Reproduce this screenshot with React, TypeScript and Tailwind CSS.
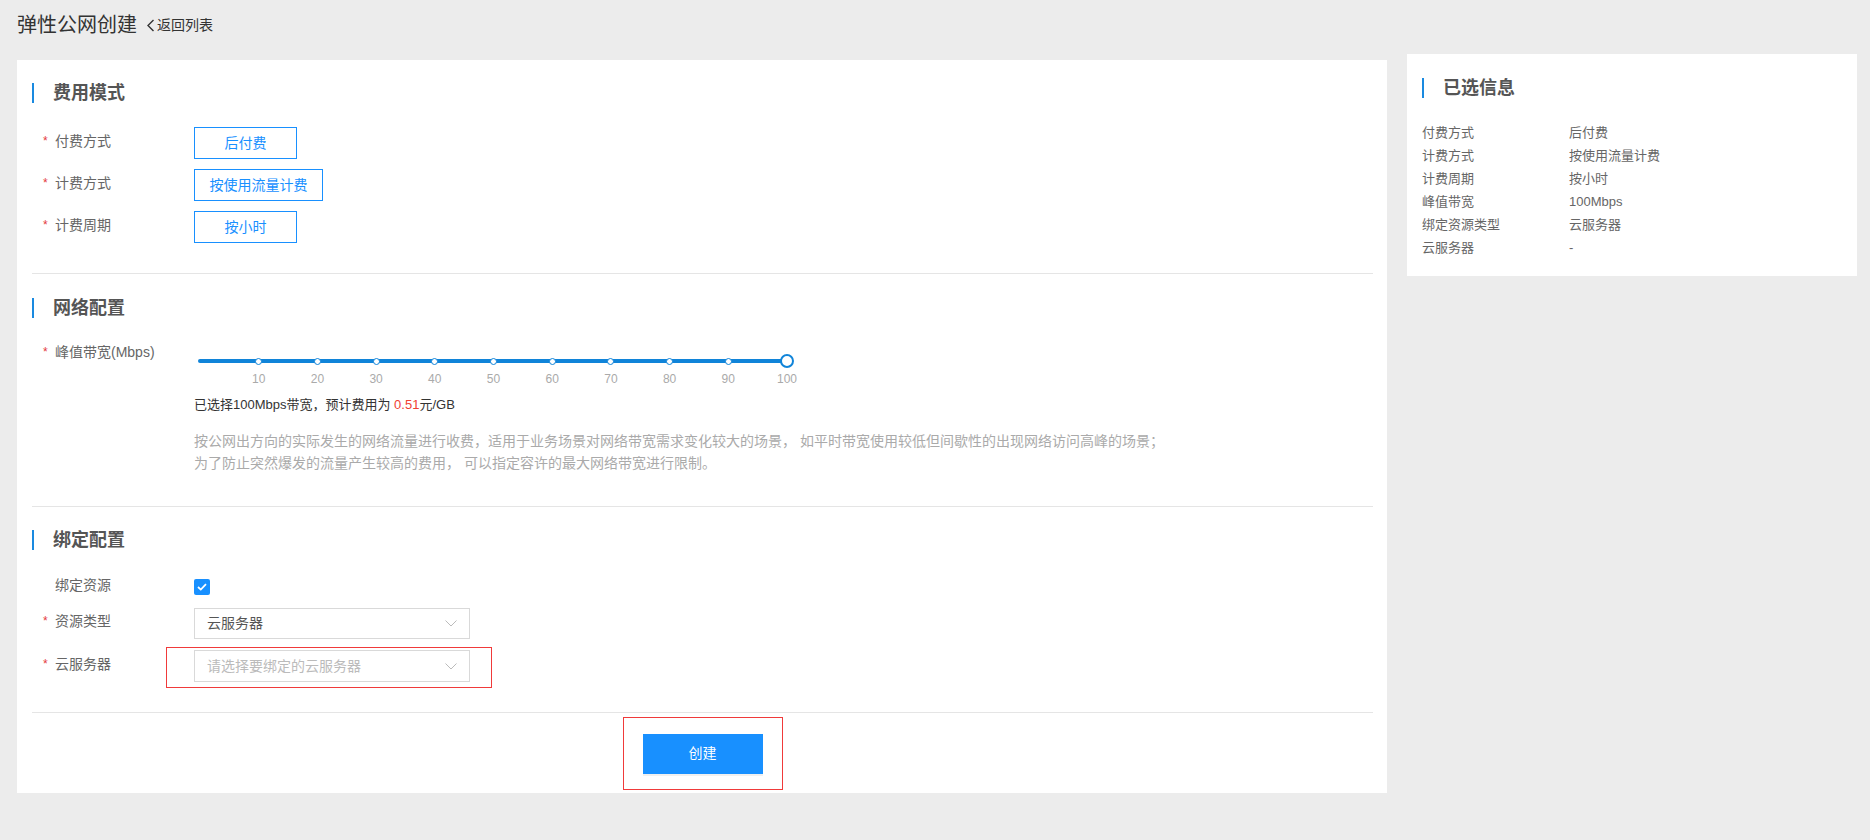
import React from 'react';

const FONT = '"Liberation Sans", "Noto Sans CJK SC", sans-serif';

function SectionTitle({ title }: { title: string }) {
    return (
        <div className="flex items-center h-[20px]">
            <div className="w-[2px] h-[20px] bg-[#1a8ae0]" />
            <span className="ml-[19px] text-[18px] leading-[20px] font-bold text-[#555]">{title}</span>
        </div>
    );
}

function FieldLabel({ text, required = true }: { text: string; required?: boolean }) {
    return (
        <div className="w-[162px] shrink-0 pl-[11px] flex items-center text-[14px] leading-[20px] text-[#666] -translate-y-[2px]">
            <span className="w-[12px] text-[12px] text-[#e4393c]">{required ? '*' : ''}</span>
            <span>{text}</span>
        </div>
    );
}

function Chevron() {
    return (
        <svg width="12" height="7" viewBox="0 0 12 7" fill="none">
            <path d="M0.5 0.5 L6 6 L11.5 0.5" stroke="#bbb" strokeWidth="1" />
        </svg>
    );
}

const ticks = [10, 20, 30, 40, 50, 60, 70, 80, 90, 100];
const TRACK_LEFT = 6;
const TRACK_WIDTH = 587;

function Slider() {
    return (
        <div className="w-[620px]">
            <div className="relative h-[14px] mt-[10px]">
                <div className="absolute top-[5px] h-[4px] bg-[#1084d9] rounded-full" style={{ left: TRACK_LEFT - 2, width: TRACK_WIDTH + 2 }} />
                {ticks.slice(0, 9).map((t) => (
                    <div
                        key={t}
                        className="absolute top-[3.5px] w-[7px] h-[7px] rounded-full bg-white border-[1.5px] border-[#1084d9]"
                        style={{ left: TRACK_LEFT + (t / 100) * TRACK_WIDTH - 3.5 }}
                    />
                ))}
                <div
                    className="absolute top-0 w-[14px] h-[14px] rounded-full bg-white border-2 border-[#1084d9]"
                    style={{ left: TRACK_LEFT + TRACK_WIDTH - 7 }}
                />
            </div>
            <div className="relative h-[18px] mt-[2px]">
                {ticks.map((t) => (
                    <span
                        key={t}
                        className="absolute top-0 -translate-x-1/2 text-[12px] leading-[18px] text-[#aaa]"
                        style={{ left: TRACK_LEFT + (t / 100) * TRACK_WIDTH }}
                    >
                        {t}
                    </span>
                ))}
            </div>
        </div>
    );
}

const summary = [
    ['付费方式', '后付费'],
    ['计费方式', '按使用流量计费'],
    ['计费周期', '按小时'],
    ['峰值带宽', '100Mbps'],
    ['绑定资源类型', '云服务器'],
    ['云服务器', '-'],
];

export default function App() {
    return (
        <div className="min-h-screen bg-[#ececec]" style={{ fontFamily: FONT }}>
            <div className="h-[50px] pl-[17px] flex items-center text-[#333]">
                <span className="text-[20px] leading-[24px]">弹性公网创建</span>
                <span className="ml-[9px] flex items-center text-[14px] cursor-pointer">
                    <svg width="9" height="13" viewBox="0 0 9 13" fill="none" className="mr-[2px]">
                        <path d="M7.5 1 L2 6.5 L7.5 12" stroke="#333" strokeWidth="1.4" />
                    </svg>
                    返回列表
                </span>
            </div>

            <div className="flex items-start gap-[20px] pl-[17px] pr-[13px]">
                {/* left form card */}
                <div className="flex-1 mt-[10px] bg-white pl-[15px] pr-[14px]">
                    <div className="pt-[23px] pb-[30px]">
                        <SectionTitle title="费用模式" />
                        <div className="mt-[24px] flex flex-col gap-[10px]">
                            <div className="flex items-center h-[32px]">
                                <FieldLabel text="付费方式" />
                                <button className="w-[103px] h-[32px] border border-[#1890ff] text-[#1890ff] text-[14px]">后付费</button>
                            </div>
                            <div className="flex items-center h-[32px]">
                                <FieldLabel text="计费方式" />
                                <button className="w-[129px] h-[32px] border border-[#1890ff] text-[#1890ff] text-[14px]">按使用流量计费</button>
                            </div>
                            <div className="flex items-center h-[32px]">
                                <FieldLabel text="计费周期" />
                                <button className="w-[103px] h-[32px] border border-[#1890ff] text-[#1890ff] text-[14px]">按小时</button>
                            </div>
                        </div>
                    </div>
                    <div className="h-px bg-[#e5e5e5]" />

                    <div className="pt-[24px] pb-[32px]">
                        <SectionTitle title="网络配置" />
                        <div className="mt-[26px] flex items-start">
                            <FieldLabel text="峰值带宽(Mbps)" />
                            <div>
                                <Slider />
                                <p className="mt-[7px] text-[13px] leading-[20px] text-[#333]">
                                    已选择100Mbps带宽，预计费用为 <span className="text-[#f04134]">0.51</span>元/GB
                                </p>
                                <div className="mt-[15px] text-[14px] leading-[22px] text-[#aaa]">
                                    <p>按公网出方向的实际发生的网络流量进行收费，适用于业务场景对网络带宽需求变化较大的场景， 如平时带宽使用较低但间歇性的出现网络访问高峰的场景；</p>
                                    <p>为了防止突然爆发的流量产生较高的费用， 可以指定容许的最大网络带宽进行限制。</p>
                                </div>
                            </div>
                        </div>
                    </div>
                    <div className="h-px bg-[#e5e5e5]" />

                    <div className="pt-[23px] pb-[30px]">
                        <SectionTitle title="绑定配置" />
                        <div className="mt-[21px] flex items-center h-[32px]">
                            <FieldLabel text="绑定资源" required={false} />
                            <div className="w-[16px] h-[16px] rounded-[2px] bg-[#1890ff] flex items-center justify-center">
                                <svg width="10" height="8" viewBox="0 0 10 8" fill="none">
                                    <path d="M1 4 L3.8 6.6 L9 1.2" stroke="white" strokeWidth="1.8" />
                                </svg>
                            </div>
                        </div>
                        <div className="mt-[4px] flex items-center h-[32px]">
                            <FieldLabel text="资源类型" />
                            <div className="w-[276px] h-[31px] border border-[#d9d9d9] pl-[12px] pr-[12px] flex items-center justify-between text-[14px] text-[#555]">
                                <span>云服务器</span>
                                <Chevron />
                            </div>
                        </div>
                        <div className="mt-[11px] flex items-center h-[32px]">
                            <FieldLabel text="云服务器" />
                            <div className="relative">
                                <div className="w-[276px] h-[32px] border border-[#d9d9d9] pl-[12px] pr-[12px] flex items-center justify-between text-[14px] text-[#bbb]">
                                    <span>请选择要绑定的云服务器</span>
                                    <Chevron />
                                </div>
                                <div className="absolute -left-[28px] -right-[22px] -top-[3px] -bottom-[6px] border border-[#f03a3a] pointer-events-none" />
                            </div>
                        </div>
                    </div>
                    <div className="h-px bg-[#e5e5e5]" />

                    <div className="pt-[4px] pb-[3px] flex justify-center">
                        <div className="w-[160px] h-[73px] border border-[#f03a3a] flex items-center justify-center">
                            <button className="w-[120px] h-[40px] bg-[#1890ff] text-white text-[14px] shadow-[0_2px_0_#f0f0f0]">创建</button>
                        </div>
                    </div>
                </div>

                {/* right summary card */}
                <div className="w-[450px] mt-[4px] bg-white pl-[15px] pt-[24px] pb-[17px]">
                    <SectionTitle title="已选信息" />
                    <div className="mt-[23px]">
                        {summary.map(([k, v]) => (
                            <div key={k} className="flex text-[13px] leading-[23px] text-[#666]">
                                <span className="w-[147px]">{k}</span>
                                <span>{v}</span>
                            </div>
                        ))}
                    </div>
                </div>
            </div>
        </div>
    );
}
